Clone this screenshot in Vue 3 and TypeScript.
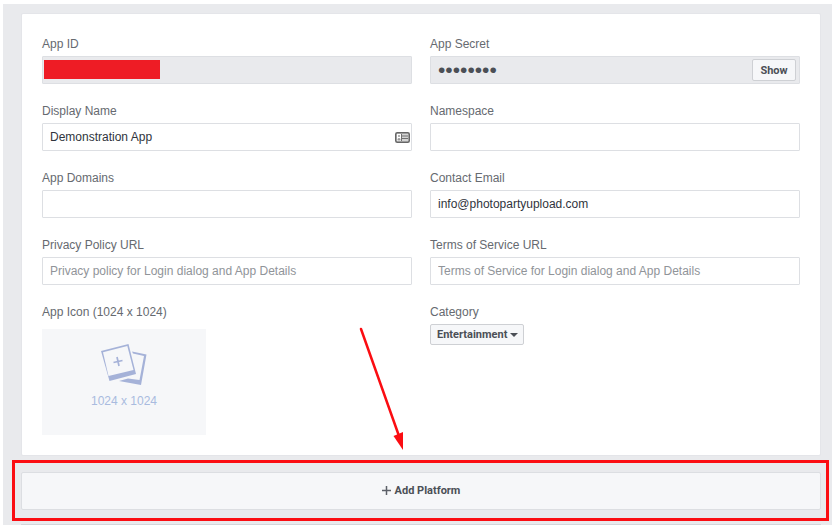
<script setup lang="ts">
import { ref } from 'vue'

const appId = ref('')
const appSecret = ref('********')
const displayName = ref('Demonstration App')
const namespace = ref('')
const appDomains = ref('')
const contactEmail = ref('info@photopartyupload.com')
const privacyUrl = ref('')
const termsUrl = ref('')
const category = ref('Entertainment')
const secretVisible = ref(false)
</script>

<template>
  <main class="page">
    <form class="card" @submit.prevent>
      <div class="field">
        <label for="app-id">App ID</label>
        <div class="control">
          <input id="app-id" v-model="appId" class="locked" type="text" readonly />
          <span class="redaction"></span>
        </div>
      </div>
      <div class="field">
        <label for="app-secret">App Secret</label>
        <div class="control">
          <input
            id="app-secret"
            v-model="appSecret"
            class="locked secret"
            :type="secretVisible ? 'text' : 'password'"
            readonly
          />
          <button class="small-button show" type="button" @click="secretVisible = !secretVisible">Show</button>
        </div>
      </div>
      <div class="field">
        <label for="display-name">Display Name</label>
        <div class="control">
          <input id="display-name" v-model="displayName" type="text" />
          <svg class="contact-icon" viewBox="0 0 15 11" width="15" height="11" aria-hidden="true">
            <rect x="0.75" y="0.75" width="13.5" height="9.5" rx="1.5" fill="#d4d4d4" stroke="#666" stroke-width="1.5" />
            <rect x="2" y="2" width="4" height="7" fill="#fff" />
            <circle cx="4" cy="4" r="1" fill="#999" />
            <path d="M2.500 8.5V7q1.500-2 3 0v1.5z" fill="#999" />
            <path d="M6.500 2v7M7 4h6M7 6.500h6" fill="none" stroke="#707070" stroke-width="1" />
          </svg>
        </div>
      </div>
      <div class="field">
        <label for="namespace">Namespace</label>
        <input id="namespace" v-model="namespace" type="text" />
      </div>
      <div class="field">
        <label for="app-domains">App Domains</label>
        <input id="app-domains" v-model="appDomains" type="text" />
      </div>
      <div class="field">
        <label for="contact-email">Contact Email</label>
        <input id="contact-email" v-model="contactEmail" type="email" />
      </div>
      <div class="field">
        <label for="privacy-url">Privacy Policy URL</label>
        <input id="privacy-url" v-model="privacyUrl" type="url" placeholder="Privacy policy for Login dialog and App Details" />
      </div>
      <div class="field">
        <label for="terms-url">Terms of Service URL</label>
        <input id="terms-url" v-model="termsUrl" type="url" placeholder="Terms of Service for Login dialog and App Details" />
      </div>
      <div class="field">
        <label for="app-icon">App Icon (1024 x 1024)</label>
        <button id="app-icon" class="upload" type="button">
          <svg viewBox="0 0 48 44" width="48" height="44" aria-hidden="true">
            <path d="M32 8.500L46.500 11.500L41 42L19 38L28 35.500L39.500 37L44 13L33 10.500z" fill="#a5b2d8" />
            <path d="M1 8L28.500 1L36 31L9.500 38z" fill="#a5b2d8" />
            <path d="M3 9.200L27.300 3L33.500 27L8.500 33z" fill="#f6f7f9" />
            <path d="M13.500 19.500l9-2M17 14l2 9" fill="none" stroke="#a5b2d8" stroke-width="1.700" />
          </svg>
          <span>1024 x 1024</span>
        </button>
      </div>
      <div class="field">
        <label for="category">Category</label>
        <div class="picker">
          <select id="category" v-model="category" class="small-button">
            <option>Entertainment</option>
          </select>
          <svg class="caret" viewBox="0 0 8 4" width="8" height="4" aria-hidden="true">
            <path d="M0 0h8L4 4z" fill="#4b4f56" />
          </svg>
        </div>
      </div>
      <svg class="arrow" viewBox="0 0 50 130" width="50" height="130" aria-hidden="true">
        <path d="M6 5L44 112" stroke="#fb0d12" stroke-width="2.500" stroke-linecap="round" />
        <path d="M38.500 112L48 108v18z" fill="#fb0d12" />
      </svg>
    </form>

    <div class="platform">
      <button class="add" type="button">
        <svg viewBox="0 0 9 9" width="9" height="9" aria-hidden="true">
          <path d="M4.500 0v9M0 4.500h9" stroke="#5c6068" stroke-width="1.500" />
        </svg>
        <span>Add Platform</span>
      </button>
    </div>
    <div class="next-card"></div>
  </main>
</template>

<style>
body {
  background: #fff;
}
</style>

<style scoped>
.page {
  margin: 4px 1px 4px 3px;
  padding: 9px 11px 0 18px;
  background: #e9eaed;
  font-family: "Liberation Sans", Arial, sans-serif;
  font-size: 12px;
  line-height: 16px;
  color: #1d2129;
}
.card {
  position: relative;
  display: grid;
  grid-template-columns: minmax(0, 1fr) minmax(0, 1fr);
  gap: 19px 18px;
  padding: 22px 20px 20px;
  border: 1px solid #e4e5e9;
  border-radius: 2px;
  background: #fff;
}
.field {
  display: flex;
  flex-direction: column;
  align-items: flex-start;
  gap: 4px;
}
label {
  color: #666a70;
}
.control {
  position: relative;
  width: 100%;
}
input {
  display: block;
  box-sizing: border-box;
  width: 100%;
  height: 28px;
  margin: 0;
  padding: 0 7px;
  border: 1px solid #dddfe3;
  border-radius: 1px;
  outline: none;
  background: #fff;
  color: #30343c;
  font: inherit;
}
input::placeholder {
  color: #909499;
  opacity: 1;
}
.locked {
  background: #e9eaed;
  color: #4b4f56;
}
.secret[type="password"] {
  font-size: 21px;
}
.redaction {
  position: absolute;
  top: 4px;
  left: 2px;
  width: 116px;
  height: 19px;
  background: #ee1c25;
}
button,
select {
  margin: 0;
  font-family: Roboto, "Liberation Sans", sans-serif;
  cursor: pointer;
}
.small-button {
  box-sizing: border-box;
  border: 1px solid #ced0d4;
  border-radius: 2px;
  background: #f6f7f9;
  color: #4b4f56;
  font-size: 11px;
  font-weight: bold;
}
.show {
  position: absolute;
  top: 3px;
  right: 4px;
  width: 44px;
  height: 22px;
  padding: 0;
}
.contact-icon {
  position: absolute;
  top: 9px;
  right: 2px;
}
.upload {
  display: flex;
  flex-direction: column;
  align-items: center;
  gap: 6px;
  width: 164px;
  height: 106px;
  margin-top: 5px;
  padding: 14px 0 0;
  border: 0;
  background: #f6f7f9;
  color: #a9bbdf;
  font-family: inherit;
  font-size: 12px;
  line-height: 16px;
}
.picker {
  position: relative;
}
select {
  appearance: none;
  display: block;
  height: 21px;
  padding: 0 15px 0 6px;
}
.caret {
  position: absolute;
  top: 9px;
  right: 6px;
  pointer-events: none;
}
.arrow {
  position: absolute;
  right: 415px;
  bottom: 1px;
  pointer-events: none;
}
.platform {
  position: relative;
  margin: 16px 0 14px;
}
.platform::after {
  content: "";
  position: absolute;
  inset: -12px -8px -11px -9px;
  border: 3px solid #fb0d12;
  pointer-events: none;
}
.add {
  display: flex;
  align-items: center;
  justify-content: center;
  gap: 4px;
  width: 100%;
  height: 38px;
  padding: 0 0 2px;
  border: 1px solid #dcdee2;
  border-radius: 2px;
  background: #f6f7f9;
  color: #4b4f56;
  font-size: 11px;
  font-weight: bold;
}
.next-card {
  height: 1px;
  background: #d3d6da;
}
</style>
